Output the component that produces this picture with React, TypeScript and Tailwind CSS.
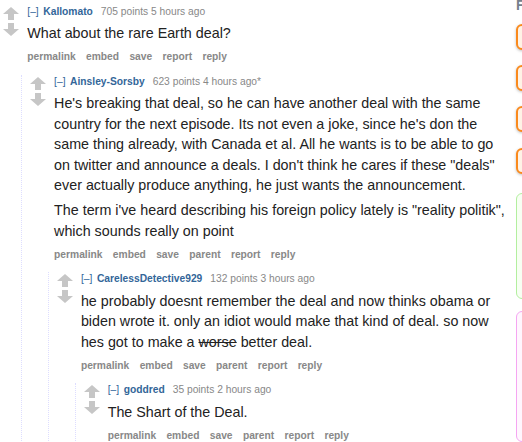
import React from "react";

type CommentData = {
  author: string;
  points: number;
  time: string;
  edited?: boolean;
  body: React.ReactNode[];
  hasParent?: boolean;
  replies?: CommentData[];
};

const thread: CommentData = {
  author: "Kallomato",
  points: 705,
  time: "5 hours ago",
  body: ["What about the rare Earth deal?"],
  replies: [
    {
      author: "Ainsley-Sorsby",
      points: 623,
      time: "4 hours ago",
      edited: true,
      hasParent: true,
      body: [
        "He's breaking that deal, so he can have another deal with the same country for the next episode. Its not even a joke, since he's don the same thing already, with Canada et al. All he wants is to be able to go on twitter and announce a deals. I don't think he cares if these \"deals\" ever actually produce anything, he just wants the announcement.",
        "The term i've heard describing his foreign policy lately is \"reality politik\", which sounds really on point",
      ],
      replies: [
        {
          author: "CarelessDetective929",
          points: 132,
          time: "3 hours ago",
          hasParent: true,
          body: [
            <>
              he probably doesnt remember the deal and now thinks obama or biden wrote it. only an idiot would make that
              kind of deal. so now hes got to make a <del>worse</del> better deal.
            </>,
          ],
          replies: [
            {
              author: "goddred",
              points: 35,
              time: "2 hours ago",
              hasParent: true,
              body: ["The Shart of the Deal."],
            },
          ],
        },
      ],
    },
  ],
};

const Arrow = ({ down }: { down?: boolean }) => (
  <svg width="16" height="13" viewBox="0 0 16 13" className={down ? "rotate-180" : ""}>
    <path d="M8 0 L16 7 L11 7 L11 13 L5 13 L5 7 L0 7 Z" fill="#c6c6c6" />
  </svg>
);

const Comment = ({ c }: { c: CommentData }) => {
  const buttons = c.hasParent
    ? ["permalink", "embed", "save", "parent", "report", "reply"]
    : ["permalink", "embed", "save", "report", "reply"];
  return (
    <div>
      <div className="flex">
        {/* vote arrows */}
        <div className="w-[27.3px] flex-none pl-[3.3px] pt-[2px] flex flex-col gap-[3.3px]">
          <Arrow />
          <Arrow down />
        </div>
        <div className="flex-1 min-w-0">
          <p className="text-[10.25px] leading-[14px] text-[#888] whitespace-nowrap">
            <span className="text-[#369] mr-[4.6px]">[–]</span>
            <span className="font-bold text-[#369]">{c.author}</span>
            <span className="ml-[8px]">
              {c.points} points {c.time}
              {c.edited && "*"}
            </span>
          </p>
          <div className="mt-[4.75px] text-[14.3px] leading-[20.5px] text-[#222] flex flex-col gap-[4.5px]">
            {c.body.map((p, i) => (
              <p key={i}>{p}</p>
            ))}
          </div>
          <ul className="mt-[6.45px] flex gap-[10.3px] text-[10.25px] leading-[14px] font-bold text-[#888]">
            {buttons.map((b) => (
              <li key={b}>{b}</li>
            ))}
          </ul>
        </div>
      </div>
      {c.replies && (
        <div className="mt-[10.2px] ml-[21px] border-l border-dotted border-[#ddf] pl-[4.8px]">
          {c.replies.map((r) => (
            <Comment key={r.author} c={r} />
          ))}
        </div>
      )}
    </div>
  );
};

export default function App() {
  return (
    <div className="w-[522px] h-[442px] overflow-hidden flex bg-white font-['Liberation_Sans',Arial,sans-serif]">
      <div className="w-[512px] flex-none pt-[4.7px]">
        <Comment c={thread} />
      </div>
      {/* sidebar, mostly off screen */}
      <div className="ml-[4px] w-[300px] flex-none flex flex-col">
        <div className="h-[29px]">
          <h3 className="-mt-[3px] text-[14px] leading-[16px] font-bold text-[#76808c]">Filter by flair</h3>
        </div>
        <div className="flex flex-col gap-[15.3px]">
          {[0, 1, 2, 3].map((i) => (
            <div
              key={i}
              className="h-[26px] rounded-md border-2 border-[#fb8a1c] bg-[#fff3e6] shadow-[0_1px_3px_rgba(0,0,0,0.25)]"
            />
          ))}
        </div>
        <div className="mt-[19px] h-[130px] rounded-md border border-[#b3ef9f] bg-[#f7fff3]" />
        <div className="mt-[12px] h-[160px] rounded-md border border-[#f5a6f2] bg-[#fff6fe]" />
      </div>
    </div>
  );
}
